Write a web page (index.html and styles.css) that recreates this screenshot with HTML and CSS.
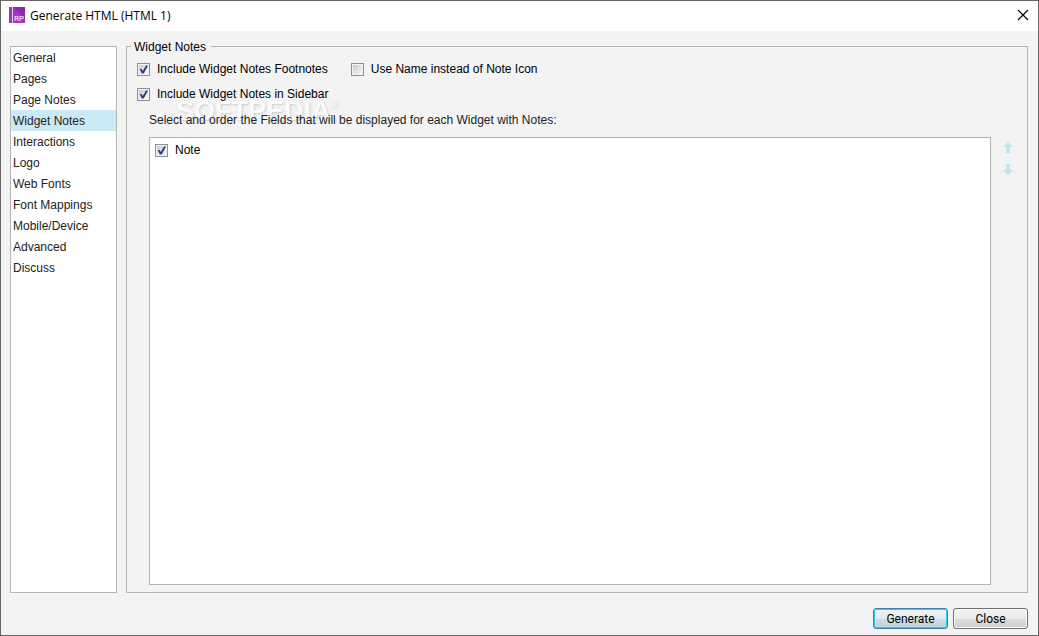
FILE: index.html
```html
<!DOCTYPE html>
<html lang="en">
<head>
    <meta charset="UTF-8">
    <meta name="viewport" content="width=device-width, initial-scale=1.0">
    <title>Generate HTML (HTML 1)</title>
    <link rel="stylesheet" href="styles.css">
</head>
<body>
    <div class="window">
        <header class="titlebar">
            <svg class="app-icon" width="16" height="16" viewBox="0 0 16 16" aria-hidden="true">
                <rect width="16" height="16" fill="#a335c2"/>
                <path d="M4 0h12v12z" fill="#8c2aa8"/>
                <rect x="3" width="1" height="16" fill="#e9cdf0"/>
                <text x="5" y="14" class="app-icon-text">RP</text>
            </svg>
            <h1>Generate HTML (HTML 1)</h1>
            <button class="close-btn" type="button" aria-label="Close window">
                <svg width="12" height="12" viewBox="0 0 12 12"><path d="M1 1l10 10M11 1L1 11" stroke="#000" stroke-width="1.2"/></svg>
            </button>
        </header>

        <form class="content">
            <div class="panels">
                <!-- Section list -->
                <nav class="sections">
                    <a href="#">General</a>
                    <a href="#">Pages</a>
                    <a href="#">Page Notes</a>
                    <a href="#" class="selected" aria-current="page">Widget Notes</a>
                    <a href="#">Interactions</a>
                    <a href="#">Logo</a>
                    <a href="#">Web Fonts</a>
                    <a href="#">Font Mappings</a>
                    <a href="#">Mobile/Device</a>
                    <a href="#">Advanced</a>
                    <a href="#">Discuss</a>
                </nav>

                <!-- Settings of the selected section -->
                <fieldset class="settings">
                    <legend>Widget Notes</legend>
                    <div class="watermark" aria-hidden="true">SOFTPEDIA<sup>®</sup></div>
                    <div class="options">
                        <label class="check"><input type="checkbox" checked>Include Widget Notes Footnotes</label>
                        <label class="check"><input type="checkbox">Use Name instead of Note Icon</label>
                    </div>
                    <div class="options">
                        <label class="check"><input type="checkbox" checked>Include Widget Notes in Sidebar</label>
                    </div>
                    <p class="hint">Select and order the Fields that will be displayed for each Widget with Notes:</p>
                    <div class="fields">
                        <div class="field-list">
                            <label class="check"><input type="checkbox" checked>Note</label>
                        </div>
                        <div class="order-buttons">
                            <button type="button" aria-label="Move up" disabled>
                                <svg width="10" height="12" viewBox="0 0 10 12"><path d="M5 0l5 5H7v6H3V5H0z" fill="#c5e2ee"/></svg>
                            </button>
                            <button type="button" aria-label="Move down" disabled>
                                <svg width="10" height="12" viewBox="0 0 10 12"><path d="M5 11l5-5H7V0H3v6H0z" fill="#c5e2ee"/></svg>
                            </button>
                        </div>
                    </div>
                </fieldset>
            </div>

            <footer class="actions">
                <button type="button" class="btn btn-default">Generate</button>
                <button type="button" class="btn">Close</button>
            </footer>
        </form>
    </div>
</body>
</html>
```
FILE: styles.css
```css
* {
    box-sizing: border-box;
}
body {
    margin: 0;
    font-family: "Liberation Sans", Arial, sans-serif;
    font-size: 12px;
    line-height: 15px;
    color: #000;
}
button {
    font: inherit;
    color: inherit;
}
svg {
    display: block;
}
.window {
    display: flex;
    flex-direction: column;
    min-height: 100vh;
    background-color: #f3f3f3;
    border: 1px solid #666;
}
.titlebar {
    display: flex;
    align-items: center;
    gap: 5px;
    height: 30px;
    padding: 0 9px 2px 8px;
    background-color: #fff;
    font-family: "Open Sans", "Noto Sans", sans-serif;
}
.titlebar h1 {
    flex: 1;
    margin: 0;
    font-size: 12px;
    font-weight: normal;
}
.app-icon-text {
    font-family: Roboto, sans-serif;
    font-size: 8px;
    fill: #fff;
}
.close-btn {
    padding: 0;
    border: none;
    background: none;
}
.content {
    flex: 1;
    display: flex;
    flex-direction: column;
    padding: 7px 10px 6px 9px;
}
.panels {
    flex: 1;
    display: flex;
    gap: 9px;
}
.sections {
    width: 107px;
    margin-top: 8px;
    background-color: #fff;
    border: 1px solid #b4b4b4;
}
.sections a {
    display: block;
    padding: 4px 2px 2px;
    color: #222;
    text-decoration: none;
}
.sections .selected {
    background-color: #c9e9f6;
}
.settings {
    position: relative;
    flex: 1;
    display: flex;
    flex-direction: column;
    min-width: 0;
    margin: 0;
    padding: 7px 10px;
    border: 1px solid #b4b4b4;
}
.settings legend {
    margin-left: -6px;
    padding: 2px 5px 0 3px;
}
.watermark {
    position: absolute;
    top: 40px;
    left: 49px;
    font-size: 27px;
    font-weight: bold;
    line-height: 32px;
    color: #fafafa;
    text-shadow: 1px 1px 2px #ccc;
}
.watermark sup {
    font-size: 10px;
    line-height: 0;
    vertical-align: 12px;
}
.options {
    position: relative;
    display: flex;
    gap: 23px;
    margin-bottom: 10px;
}
.check {
    display: flex;
    align-items: center;
    gap: 7px;
}
.check input {
    appearance: none;
    width: 13px;
    height: 13px;
    margin: 0;
    border: 1px solid #8e8f8f;
    background: linear-gradient(135deg, #c6cbd4, #f6f6f6) center / 9px 9px no-repeat #f4f4f4;
}
.check input:checked::before {
    content: "";
    display: block;
    width: 9px;
    height: 9px;
    margin: 1px;
    background-color: #2f3a80;
    clip-path: polygon(8% 45%, 30% 45%, 42% 68%, 78% 5%, 100% 5%, 52% 95%, 32% 95%);
}
.hint {
    position: relative;
    margin: 1px 12px 9px;
    color: #222;
}
.fields {
    flex: 1;
    display: flex;
    gap: 12px;
    padding-left: 12px;
}
.field-list {
    flex: 1;
    padding: 5px;
    background-color: #fff;
    border: 1px solid #b4b4b4;
}
.order-buttons {
    display: flex;
    flex-direction: column;
    gap: 10px;
    padding: 5px 4px 0 0;
}
.order-buttons button {
    padding: 0;
    border: none;
    background: none;
}
.actions {
    display: flex;
    justify-content: flex-end;
    gap: 5px;
    margin-top: 15px;
}
.btn {
    width: 75px;
    height: 21px;
    padding: 2px 0 0;
    border: 1px solid #707070;
    border-radius: 3px;
    background: linear-gradient(#f2f2f2, #ebebeb 50%, #dddddd 50%, #cfcfcf);
    box-shadow: inset 0 0 0 1px #fafafa;
    font-family: Roboto, "Open Sans", sans-serif;
}
.btn-default {
    border-color: #3c7fb1;
    background: linear-gradient(#eef3f6, #e3ebf0 50%, #d0dde5 50%, #c0d0da);
    box-shadow: inset 0 0 0 1px #2ccdf7;
}
```
